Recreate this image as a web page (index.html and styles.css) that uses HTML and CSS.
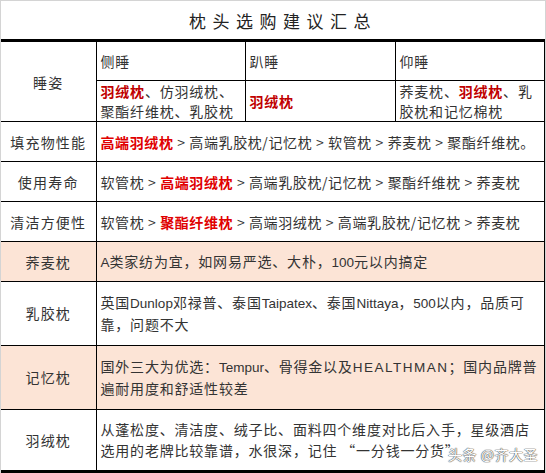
FILE: index.html
```
<!DOCTYPE html>
<html lang="zh">
<head>
<meta charset="utf-8">
<link rel="stylesheet" href="styles.css">
</head>
<body>
<div class="frame">
  <div class="title">枕头选购建议汇总</div>
  <table class="sheet">
    <colgroup>
      <col class="c1"><col class="c2"><col class="c3"><col class="c4">
    </colgroup>
    <tr class="r40">
      <td class="label" rowspan="2">睡姿</td>
      <td>侧睡</td>
      <td>趴睡</td>
      <td>仰睡</td>
    </tr>
    <tr class="r40">
      <td><b class="dred">羽绒枕</b>、仿羽绒枕、聚酯纤维枕、乳胶枕</td>
      <td><b class="dred">羽绒枕</b></td>
      <td>荞麦枕、<b class="dred">羽绒枕</b>、乳胶枕和记忆棉枕</td>
    </tr>
    <tr class="r40">
      <td class="label">填充物性能</td>
      <td colspan="3" class="one"><b class="red">高端羽绒枕</b> &gt; 高端乳胶枕/记忆枕 &gt; 软管枕 &gt; 荞麦枕 &gt; 聚酯纤维枕。</td>
    </tr>
    <tr class="r40">
      <td class="label">使用寿命</td>
      <td colspan="3" class="one">软管枕 &gt; <b class="red">高端羽绒枕</b> &gt; 高端乳胶枕/记忆枕 &gt; 聚酯纤维枕 &gt; 荞麦枕</td>
    </tr>
    <tr class="r40">
      <td class="label">清洁方便性</td>
      <td colspan="3" class="one">软管枕 &gt; <b class="red">聚酯纤维枕</b> &gt; 高端羽绒枕 &gt; 高端乳胶枕/记忆枕 &gt; 荞麦枕</td>
    </tr>
    <tr class="r40 peach">
      <td class="label">荞麦枕</td>
      <td colspan="3"><span class="en">A</span>类家纺为宜，如网易严选、大朴，<span class="en">100</span>元以内搞定</td>
    </tr>
    <tr class="r64">
      <td class="label">乳胶枕</td>
      <td colspan="3">英国<span class="en">Dunlop</span>邓禄普、泰国<span class="en">Taipatex</span>、泰国<span class="en">Nittaya</span>，<span class="en">500</span>以内，品质可靠，问题不大</td>
    </tr>
    <tr class="r64 peach">
      <td class="label">记忆枕</td>
      <td colspan="3">国外三大为优选：<span class="en">Tempur</span>、骨得金以及<span class="en caps">HEALTHMAN</span>；国内品牌普遍耐用度和舒适性较差</td>
    </tr>
    <tr class="r62">
      <td class="label">羽绒枕</td>
      <td colspan="3">从蓬松度、清洁度、绒子比、面料四个维度对比后入手，星级酒店选用的老牌比较靠谱，水很深，记住 “一分钱一分货”</td>
    </tr>
  </table>
  <div class="mark">头条 @齐大圣</div>
</div>
</body>
</html>
```
FILE: styles.css
```
html, body {
  margin: 0;
  padding: 0;
  background: #ffffff;
}
.frame {
  position: relative;
  width: 546px;
  height: 473px;
  box-sizing: border-box;
  border: 1px solid #d4d4d4;
  border-bottom: none;
  background: #ffffff;
  font-family: "Noto Sans CJK SC", "Noto Sans", sans-serif;
  color: #333333;
  overflow: hidden;
}
.title {
  height: 38px;
  display: flex;
  align-items: center;
  justify-content: center;
  font-size: 17px;
  letter-spacing: 6.5px;
  color: #222222;
  padding-left: 20px;
}
.sheet {
  border-collapse: collapse;
  table-layout: fixed;
  width: 544px;
  font-size: 14px;
  line-height: 21px;
  letter-spacing: 0.8px;
  border-top: 3px solid #000;
  border-bottom: 3px solid #000;
  border-right: 2px solid #000;
}
.c1 { width: 95px; }
.c2 { width: 149px; }
.c3 { width: 150px; }
.c4 { width: 150px; }
.sheet td {
  border: 1px solid #000;
  padding: 0 2px 0 4px;
  vertical-align: middle;
  text-align: left;
}
.sheet td.one {
  white-space: nowrap;
  overflow: hidden;
  letter-spacing: 0.6px;
}
.sheet td:first-child {
  border-left: none;
}
.sheet td.label {
  text-align: center;
  padding: 0;
  letter-spacing: 1.2px;
}
.en {
  font-family: "Liberation Sans", "Noto Sans", sans-serif;
  font-size: 13.5px;
  letter-spacing: 0;
}
.en.caps {
  letter-spacing: 1.5px;
}
.r40 { height: 40px; }
.r40 td { line-height: 20px; }
.r64 { height: 64px; }
.r62 { height: 62px; }
.peach td { background: #fce4d6; }
b { font-weight: 700; }
.dred { color: #c00000; }
.red { color: #e00000; }
.mark {
  position: absolute;
  right: 7px;
  top: 443px;
  font-size: 14px;
  line-height: 20px;
  color: #ffffff;
  text-shadow: 0 0 1px #555, 0 0 1px #555, 0 0 1px #555;
  letter-spacing: 0.5px;
}
```
